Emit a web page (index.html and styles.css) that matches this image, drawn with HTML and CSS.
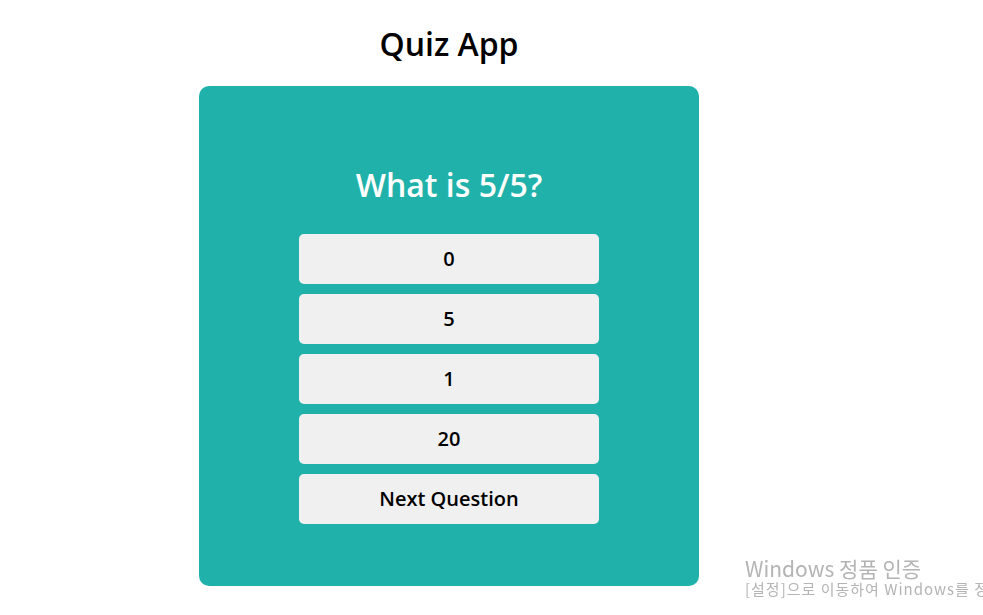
FILE: index.html
```html
<!DOCTYPE html>
<html lang="en">
<head>
<meta charset="utf-8">
<title>Quiz App</title>
<link rel="stylesheet" href="styles.css">
</head>
<body>
<div class="page">
  <h1 class="title">Quiz App</h1>
  <div class="card">
    <h2 class="question">What is 5/5?</h2>
    <div class="answers">
      <button class="btn">0</button>
      <button class="btn">5</button>
      <button class="btn">1</button>
      <button class="btn">20</button>
      <button class="btn">Next Question</button>
    </div>
  </div>
</div>
<div class="watermark">
  <div class="wm-title">Windows 정품 인증</div>
  <div class="wm-sub">[설정]으로 이동하여 Windows를 정품 인증합니다.</div>
</div>
</body>
</html>
```

FILE: styles.css
```css
html, body {
  margin: 0;
  padding: 0;
  background: #ffffff;
  overflow: hidden;
}
body {
  font-family: "Open Sans", "Noto Sans CJK KR", sans-serif;
}
.page {
  width: 898px;
  display: flex;
  flex-direction: column;
  align-items: center;
}
.title {
  margin: 22px 0 0 0;
  font-size: 32px;
  line-height: 44px;
  font-weight: 600;
  color: #000;
}
.card {
  margin-top: 20px;
  width: 500px;
  height: 500px;
  box-sizing: border-box;
  padding-top: 77px;
  background: #20b2aa;
  border-radius: 10px;
  display: flex;
  flex-direction: column;
  align-items: center;
}
.question {
  margin: 0 0 27px 0;
  font-size: 32px;
  line-height: 44px;
  font-weight: 600;
  color: #ffffff;
}
.answers {
  display: flex;
  flex-direction: column;
  gap: 10px;
}
.btn {
  width: 300px;
  height: 50px;
  border: none;
  border-radius: 5px;
  background: #f0f0f0;
  font-family: "Open Sans", sans-serif;
  font-size: 20px;
  font-weight: 600;
  color: #000;
  padding: 0 0 2px 0;
}
.watermark {
  position: fixed;
  left: 745px;
  top: 556px;
  white-space: nowrap;
  color: #b4b4b4;
  font-family: "Noto Sans CJK KR", sans-serif;
}
.wm-title {
  font-size: 21px;
  line-height: 24px;
}
.wm-sub {
  font-size: 15px;
  line-height: 18px;
  letter-spacing: 1px;
}
```
